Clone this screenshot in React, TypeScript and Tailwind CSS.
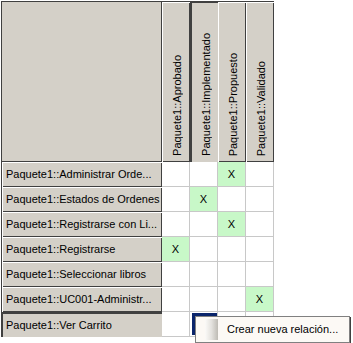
import React from "react"

const columns = [
  "Paquete1::Aprobado",
  "Paquete1::Implementado",
  "Paquete1::Propuesto",
  "Paquete1::Validado",
]

const rows: { name: string; marks: number[] }[] = [
  { name: "Paquete1::Administrar Orde...", marks: [2] },
  { name: "Paquete1::Estados de Ordenes", marks: [1] },
  { name: "Paquete1::Registrarse con Li...", marks: [2] },
  { name: "Paquete1::Registrarse", marks: [0] },
  { name: "Paquete1::Seleccionar libros", marks: [] },
  { name: "Paquete1::UC001-Administr...", marks: [3] },
  { name: "Paquete1::Ver Carrito", marks: [] },
]

const raised = "bg-[#d4d0c8] shadow-[inset_1px_1px_0_#ffffff,inset_-1px_-1px_0_#404040]"

export default function App() {
  return (
    <div className="relative w-[353px] h-[343px] bg-white overflow-hidden font-['Liberation_Sans',Arial,sans-serif] text-[11px] text-black">
      <div className="pt-px pl-px">
        <div className="grid grid-cols-[160px_repeat(4,28px)] grid-rows-[160px_repeat(7,25px)] w-fit border-t border-l border-[#404040]">
          {/* corner */}
          <div className="bg-[#d4d0c8] shadow-[inset_-1px_-1px_0_#404040]" />

          {columns.map((col, i) => (
            <div
              key={col}
              className={
                i === 1
                  ? "flex flex-col justify-end items-center pb-[6px] bg-[#d4d0c8] border-t-2 border-l-2 border-[#404040] -mt-px"
                  : `flex flex-col justify-end items-center pb-[6px] ${raised}`
              }
            >
              <span className="[writing-mode:vertical-rl] rotate-180 whitespace-nowrap leading-none pr-[2px]">
                {col}
              </span>
            </div>
          ))}

          {rows.map((row, r) => (
            <React.Fragment key={row.name}>
              <div
                className={
                  r === rows.length - 1
                    ? "flex items-center pl-[3px] bg-[#d4d0c8] border-l-2 border-t-2 border-[#404040] -ml-px whitespace-nowrap"
                    : `flex items-center pl-[4px] whitespace-nowrap ${raised}`
                }
              >
                {row.name}
              </div>
              {columns.map((_, c) => {
                const marked = row.marks.includes(c)
                const selected = r === rows.length - 1 && c === 1
                return (
                  <div
                    key={c}
                    className={`flex items-center justify-center border-r border-b border-[#c8c8c8] ${
                      marked ? "bg-[#c8f8c8]" : "bg-white"
                    }`}
                  >
                    {marked && <span>X</span>}
                    {selected && <div className="w-[25px] h-[22px] -mr-px bg-[#0a246a]" />}
                  </div>
                )
              })}
            </React.Fragment>
          ))}
        </div>
      </div>

      {/* context menu */}
      <div className="absolute left-[195px] top-[316px] w-[155px] h-[27px] bg-[#fcf9f5] border border-[#808080] shadow-[1px_1px_0_#404040]">
        <div className="flex items-center h-[25px] pl-[9px]">
          <div className="w-[13px] h-[21px] bg-gradient-to-r from-[#fbfaf8] via-[#e4e2de] to-[#bebbb4]" />
          <span className="pl-[9px] whitespace-nowrap">Crear nueva relación...</span>
        </div>
      </div>
    </div>
  )
}
